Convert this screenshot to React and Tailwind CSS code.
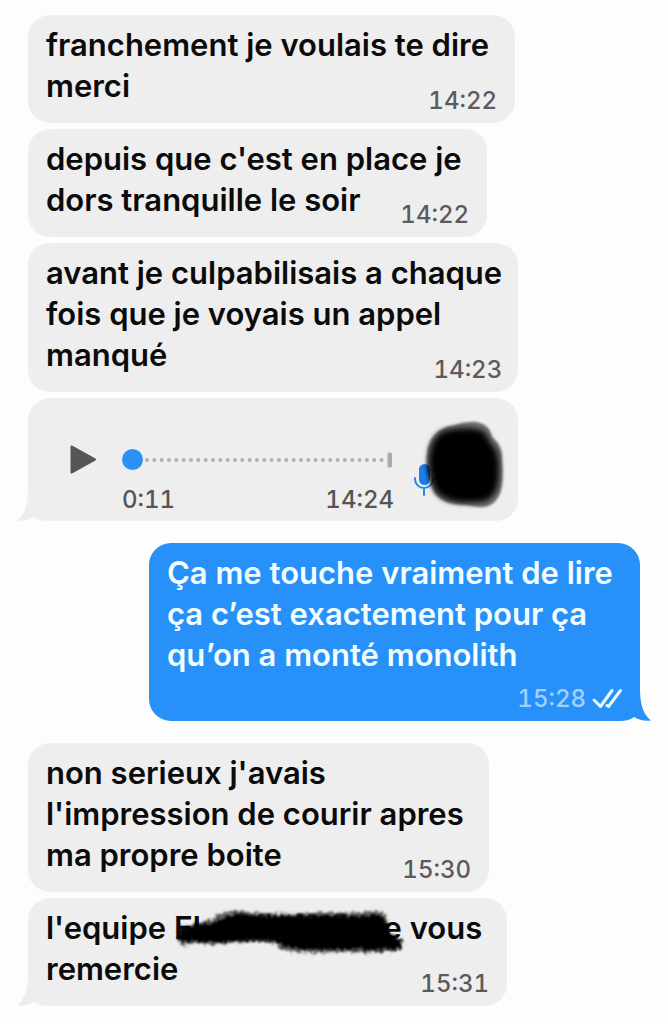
import React from 'react'
import clsx from 'clsx'

// Small curl at the bottom corner of the last bubble in a group
function Tail({ side }) {
  return (
    <svg
      viewBox="0 0 32 32"
      aria-hidden="true"
      className={clsx(
        'absolute bottom-0 h-8 w-8',
        side === 'right' ? '-right-[11px] text-[#2890f9]' : '-left-[11px] -scale-x-100 text-[#eeeeee]'
      )}
    >
      <path d="M0 0H21C21 15 24 25 32 31.5C26 32.5 20 31 15 28C11 31 6 32 0 32Z" fill="currentColor" />
    </svg>
  )
}

// Double tick
function ReadTicks() {
  return (
    <svg viewBox="0 0 32 24" className="h-6 w-8 overflow-visible" fill="none" stroke="#e6fbff" strokeWidth="3" strokeLinecap="round" strokeLinejoin="round" role="img" aria-label="Lu">
      <path d="M4 13L10.500 19.500L22 3.500" />
      <path d="M17 18.500L18.500 19.500L30.500 3.500" />
    </svg>
  )
}

function Bubble({ className, tail, sent, time, children }) {
  return (
    <article
      className={clsx(
        'relative grid max-w-full rounded-[22px] px-[18px] pt-[9px]',
        sent ? 'self-end bg-[#2890f9] pb-[46px] text-[#f0feff]' : 'bg-[#eeeeee] pb-[17px] text-[#0b0b0c]',
        className
      )}
    >
      {tail && <Tail side={sent ? 'right' : 'left'} />}
      <p className="relative whitespace-nowrap text-[31px] font-semibold leading-[41px] [grid-area:1/1]">{children}</p>
      <div
        className={clsx(
          'relative flex items-center gap-1 self-end justify-self-end text-[24px] font-medium tabular-nums leading-6 [grid-area:1/1]',
          sent ? '-mb-9 text-[#9fd2ff]' : '-mb-[7px] text-[#5b5b5e]'
        )}
      >
        <time>{time}</time>
        {sent && <ReadTicks />}
      </div>
    </article>
  )
}

// Marker scribble that hides a name
function HiddenName() {
  return (
    <span className="relative inline-flex w-[228px] justify-between">
      <span>El</span>
      <span>e</span>
      <svg viewBox="0 0 228 48" aria-hidden="true" className="absolute left-0 top-0 h-12 w-[228px] overflow-visible">
        <defs>
          <filter id="rough" x="-5%" y="-30%" width="110%" height="160%">
            <feTurbulence type="fractalNoise" baseFrequency="0.3" numOctaves="3" seed="4" />
            <feDisplacementMap in="SourceGraphic" scale="9" xChannelSelector="R" yChannelSelector="G" />
            <feGaussianBlur stdDeviation="0.8" />
          </filter>
        </defs>
        <path
          filter="url(#rough)"
          fill="#000"
          fillOpacity="0.6"
          d="M5 20L20 17L38 12L48 6L66 4L90 6L120 7L150 5L180 6L208 4L213 12L215 27L227 31L227 43L200 46L170 45L140 46L120 45L106 42L100 36L80 34L60 36L40 37L20 36L8 39L3 31Z"
        />
        <path
          filter="url(#rough)"
          fill="#000"
          d="M6 22L20 19L40 15L52 9L66 7L90 9L120 9L150 8L180 9L207 8L213 16L216 27L227 32L227 42L200 43L170 42L140 43L120 41L108 39L102 34L80 33L60 34L40 35L20 34L8 35L6 31Z"
        />
      </svg>
    </span>
  )
}

function VoiceMessage() {
  return (
    <article className="relative flex h-[123px] w-[490px] max-w-full rounded-[22px] bg-[#eeeeee] pl-[42px] pr-[14px] pt-[42px] text-[24px] font-medium tabular-nums leading-6 text-[#555558]">
      <Tail side="left" />
      <button type="button" aria-label="Lire" className="h-10 w-7 shrink-0">
        <svg viewBox="0 0 28 40" className="h-10 w-7">
          <path d="M1.500 6.500L25 19.500L1.500 32.500Z" fill="#555659" stroke="#555659" strokeWidth="2" strokeLinejoin="round" />
        </svg>
      </button>
      <div className="ml-6 w-[272px]">
        <svg viewBox="0 0 272 40" className="h-10 w-full" aria-hidden="true">
          <path d="M25 20H262" stroke="#b0b0b3" strokeWidth="4" strokeLinecap="round" strokeDasharray="0 7.330" />
          <rect x="265.500" y="12.500" width="4.500" height="15" rx="1.500" fill="#aaaaac" />
          <circle cx="10.500" cy="19.500" r="10.500" fill="#2b90fa" />
        </svg>
        <div className="mt-2 flex justify-between">
          <span>0:11</span>
          <time>14:24</time>
        </div>
      </div>
      <svg viewBox="0 0 92 92" aria-hidden="true" className="ml-auto -mt-[20px] h-[92px] w-[92px] shrink-0 overflow-visible">
        <defs>
          <filter id="soft" x="-15%" y="-15%" width="130%" height="130%">
            <feGaussianBlur stdDeviation="1" />
          </filter>
          <filter id="softer" x="-15%" y="-15%" width="130%" height="130%">
            <feGaussianBlur stdDeviation="3" />
          </filter>
        </defs>
        <rect x="7" y="44" width="11" height="21" rx="5.500" fill="#1c7ce8" />
        <path d="M3 58V59A9 9 0 0 0 21 59M12 68V75" fill="none" stroke="#2b88ea" strokeWidth="2" strokeLinecap="round" />
        <path
          filter="url(#soft)"
          d="M38 6C44 5 50 2 58 2C66 1 73 4 77 9C79 12 79 16 82 19C88 24 91 32 90 41C91 50 91 62 89 70C87 79 80 87 71 87C63 88 58 85 52 85C42 85 33 83 26 77C19 71 20 64 17 58C14 51 14 42 15 33C16 22 22 10 38 6Z"
          fill="#000"
          fillOpacity="0.5"
        />
        <path
          filter="url(#softer)"
          d="M34 10C44 8 56 7 66 9C74 11 76 16 78 22C87 30 88 42 87 56C87 70 80 82 68 82C52 84 36 82 27 75C19 67 18 56 17 44C17 30 20 15 34 10Z"
          fill="#000"
        />
      </svg>
    </article>
  )
}

export default function App() {
  return (
    <main className="flex min-h-screen flex-col items-start gap-[22px] bg-[#fdfdfd] pb-[18px] pl-7 pr-7 pt-[15px] font-['Inter','Liberation_Sans',sans-serif]">
      <section className="flex w-full flex-col items-start gap-[6px]">
        <Bubble className="w-[487px]" time="14:22">
          franchement je voulais te dire<br />merci
        </Bubble>
        <Bubble className="w-[459px]" time="14:22">
          depuis que c'est en place je<br />dors tranquille le soir
        </Bubble>
        <Bubble className="w-[490px]" time="14:23">
          avant je culpabilisais a chaque<br />fois que je voyais un appel<br />manqué
        </Bubble>
        <VoiceMessage />
      </section>

      <section className="flex w-full flex-col">
        <Bubble sent tail className="w-[491px]" time="15:28">
          Ça me touche vraiment de lire<br />ça c’est exactement pour ça<br />qu’on a monté monolith
        </Bubble>
      </section>

      <section className="flex w-full flex-col items-start gap-[6px]">
        <Bubble className="w-[461px]" time="15:30">
          non serieux j'avais<br />l'impression de courir apres<br />ma propre boite
        </Bubble>
        <Bubble tail className="w-[479px]" time="15:31">
          l'equipe <HiddenName /> vous<br />remercie
        </Bubble>
      </section>
    </main>
  )
}
